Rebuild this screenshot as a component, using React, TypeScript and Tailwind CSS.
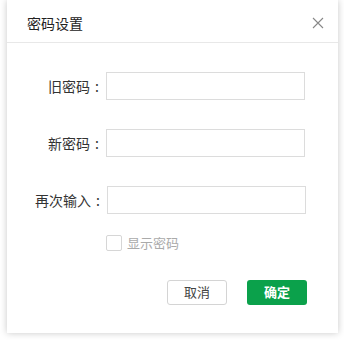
import { useState } from "react";

const font = { fontFamily: '"Noto Sans CJK SC", "Noto Sans", sans-serif' };

function Field({ label, className = "" }: { label: string; className?: string }) {
  return (
    <div className={`flex items-center ${className}`}>
      <label className="w-[99px] pr-[7px] text-right text-[14px] text-[#333]">
        {label}
        <span className="ml-[5px]">:</span>
      </label>
      <input
        type="password"
        className="h-[28px] w-[199px] border border-[#dcdcdc] bg-white px-2 text-[13px] outline-none"
      />
    </div>
  );
}

export default function App() {
  const [show, setShow] = useState(false);
  return (
    <div className="h-[340px] w-[344px] bg-white" style={font}>
      <div className="ml-[7px] flex h-[333px] w-[331px] flex-col bg-white shadow-[0_0_7px_rgba(0,0,0,0.22)]">
        {/* 标题 */}
        <div className="flex h-[43px] items-center justify-between border-b border-[#e8e8e8] pl-[20px] pr-[14px] pt-[4px]">
          <span className="text-[14px] text-[#222]">密码设置</span>
          <button className="text-[#888]">
            <svg width="12" height="12" viewBox="0 0 12 12" stroke="currentColor" strokeWidth="1.1">
              <path d="M1 1L11 11M11 1L1 11" />
            </svg>
          </button>
        </div>

        <div className="flex flex-col pt-[29px]">
          <Field label="旧密码" />
          <Field label="新密码" className="mt-[29px]" />
          <Field label="再次输入" className="mt-[29px] pl-[1px]" />

          <label className="ml-[99px] mt-[19px] flex items-center gap-[5px] text-[13px] text-[#aaa]">
            <input
              type="checkbox"
              checked={show}
              onChange={() => setShow(!show)}
              className="h-[16px] w-[16px] appearance-none rounded-[2px] border border-[#d6d6d6] bg-white"
            />
            显示密码
          </label>

          <div className="mt-[27px] flex justify-end gap-[20px] pr-[31px]">
            <button className="h-[25px] w-[60px] rounded-[3px] border border-[#d4d4d4] bg-white text-[13px] text-[#444]">
              取消
            </button>
            <button className="h-[25px] w-[60px] rounded-[3px] bg-[#0ba14b] text-[13px] font-bold text-white">
              确定
            </button>
          </div>
        </div>
      </div>
    </div>
  );
}
